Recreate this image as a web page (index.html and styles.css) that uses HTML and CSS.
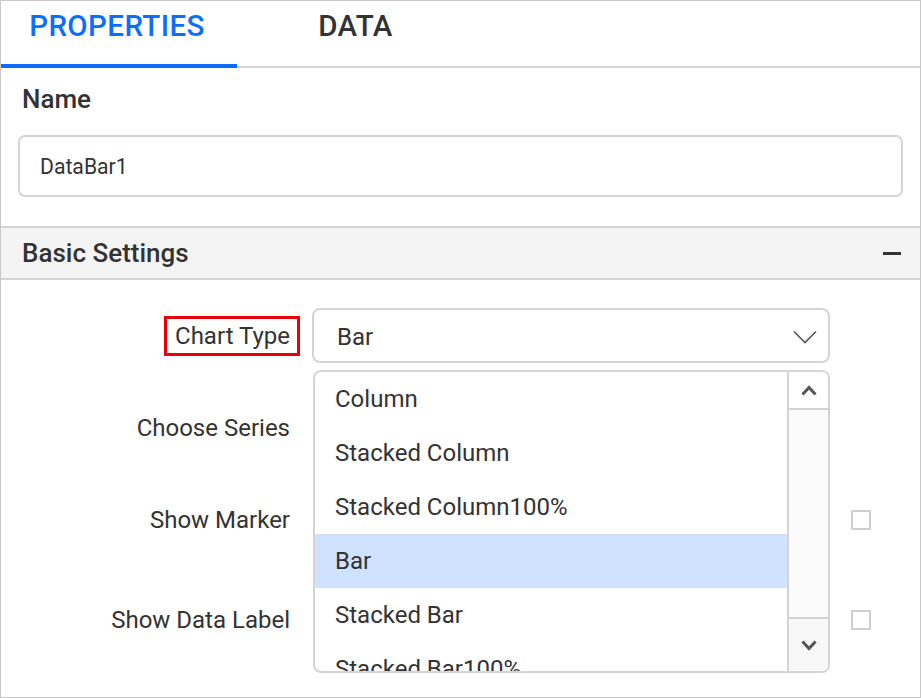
FILE: index.html
```html
<!DOCTYPE html>
<html lang="en">
<head>
  <meta charset="UTF-8" />
  <title>Properties</title>
  <link rel="stylesheet" href="styles.css">
</head>
<body>
  <div class="panel">
    <div class="tabs">
      <div class="tab active">PROPERTIES</div>
      <div class="tab">DATA</div>
    </div>

    <div class="name-section">
      <div class="section-label">Name</div>
      <input class="text-input" type="text" value="DataBar1" />
    </div>

    <div class="group-header">
      <span>Basic Settings</span>
      <span class="collapse-icon"></span>
    </div>

    <div class="settings">
      <div class="row">
        <div class="label-col"><span class="label highlight-box">Chart Type</span></div>
        <div class="control dropdown">
          <span>Bar</span>
          <svg class="chevron" width="24" height="14" viewBox="0 0 24 14">
            <polyline points="1,1.5 12,12.5 23,1.5" fill="none" stroke="#555" stroke-width="1.6" />
          </svg>
        </div>
      </div>
      <div class="row">
        <div class="label-col"><span class="label">Choose Series</span></div>
        <div class="control"></div>
      </div>
      <div class="row">
        <div class="label-col"><span class="label">Show Marker</span></div>
        <div class="control"></div>
        <div class="checkbox"></div>
      </div>
      <div class="row last">
        <div class="label-col"><span class="label">Show Data Label</span></div>
        <div class="control"></div>
        <div class="checkbox"></div>
      </div>
    </div>

    <!-- popup de la lista desplegable -->
    <div class="popup">
      <ul class="options">
        <li>Column</li>
        <li>Stacked Column</li>
        <li>Stacked Column100%</li>
        <li class="selected">Bar</li>
        <li>Stacked Bar</li>
        <li>Stacked Bar100%</li>
      </ul>
      <div class="scrollbar">
        <div class="scroll-btn up">
          <svg width="16" height="11" viewBox="0 0 16 11">
            <polyline points="1.5,9.5 8,2.5 14.5,9.5" fill="none" stroke="#555" stroke-width="3" />
          </svg>
        </div>
        <div class="scroll-track"></div>
        <div class="scroll-btn down">
          <svg width="16" height="11" viewBox="0 0 16 11">
            <polyline points="1.5,1.5 8,8.5 14.5,1.5" fill="none" stroke="#555" stroke-width="3" />
          </svg>
        </div>
      </div>
    </div>
  </div>
</body>
</html>
```

FILE: styles.css
```css
body {
  margin: 0;
  font-family: 'Roboto', 'Liberation Sans', sans-serif;
  color: #333;
  background-color: white;
}
.panel {
  position: relative;
  width: 921px;
  height: 698px;
  box-sizing: border-box;
  border: 1px solid #c8c8c8;
  overflow: hidden;
}
.tabs {
  display: flex;
  height: 67px;
  box-sizing: border-box;
  border-bottom: 2px solid #d4d4d4;
}
.tab {
  width: 237px;
  height: 67px;
  box-sizing: border-box;
  margin-bottom: -2px;
  padding-top: 8px;
  text-align: center;
  font-size: 29.5px;
  line-height: 34px;
  font-weight: 500;
  letter-spacing: 0.4px;
  color: #333;
}
.tab.active {
  width: 236px;
  padding-right: 4px;
  color: #0d6efd;
  border-bottom: 4px solid #0d6efd;
}
.name-section {
  padding: 16px 17px 29px 17px;
}
.section-label {
  padding-left: 4px;
  font-size: 26px;
  line-height: 30px;
  font-weight: 500;
}
.text-input {
  display: block;
  width: 885px;
  height: 62px;
  box-sizing: border-box;
  margin-top: 21px;
  margin-left: 0;
  padding: 0 20px;
  border: 2px solid #d4d4d4;
  border-radius: 7px;
  font-family: 'Roboto', 'Liberation Sans', sans-serif;
  font-size: 21.2px;
  color: #333;
  outline: none;
}
.group-header {
  display: flex;
  justify-content: space-between;
  align-items: center;
  height: 54px;
  box-sizing: border-box;
  padding: 0 19px 0 21px;
  background-color: #f4f4f4;
  border-top: 2px solid #d4d4d4;
  border-bottom: 2px solid #d4d4d4;
  font-size: 26px;
  font-weight: 500;
}
.collapse-icon {
  display: inline-block;
  width: 18px;
  height: 3px;
  background-color: #333;
}
.settings {
  padding-top: 28px;
}
.row {
  display: flex;
  align-items: center;
  height: 55px;
}
.row + .row {
  margin-top: 37px;
}
.row.last {
  margin-top: 45px;
}
.label-col {
  width: 289px;
  display: flex;
  justify-content: flex-end;
}
.label {
  font-size: 24px;
  line-height: 28px;
  color: #333;
}
.highlight-box {
  border: 3.5px solid #e8000b;
  padding: 3px 7px 3px 8px;
  margin-right: -10px;
}
.control {
  width: 518px;
  height: 55px;
  margin-left: 22px;
  box-sizing: border-box;
}
.dropdown {
  display: flex;
  justify-content: space-between;
  align-items: center;
  padding: 2px 11px 0 23px;
  border: 2px solid #d4d4d4;
  border-radius: 8px;
  font-size: 24px;
}
.checkbox {
  width: 20px;
  height: 20px;
  box-sizing: border-box;
  margin-left: 21px;
  border: 2px solid #cfcfcf;
}
.popup {
  position: absolute;
  left: 312px;
  top: 369px;
  width: 517px;
  height: 303px;
  box-sizing: border-box;
  display: flex;
  border: 2px solid #d4d4d4;
  border-radius: 8px;
  background-color: white;
  overflow: hidden;
}
.options {
  flex: 1;
  list-style: none;
  margin: 0;
  padding: 0;
  overflow: hidden;
}
.options li {
  height: 54px;
  padding-left: 20px;
  line-height: 54px;
  font-size: 24px;
  white-space: nowrap;
}
.options li.selected {
  background-color: #cfe2ff;
}
.scrollbar {
  width: 39px;
  display: flex;
  flex-direction: column;
  border-left: 2px solid #d4d4d4;
  background-color: #fbfbfb;
}
.scroll-btn {
  display: flex;
  justify-content: center;
  align-items: center;
}
.scroll-btn.up {
  height: 36px;
  border-bottom: 2px solid #d4d4d4;
  background-color: white;
}
.scroll-track {
  flex: 1;
}
.scroll-btn.down {
  height: 52px;
  border-top: 2px solid #d4d4d4;
  background-color: #f8f8f8;
}
```
